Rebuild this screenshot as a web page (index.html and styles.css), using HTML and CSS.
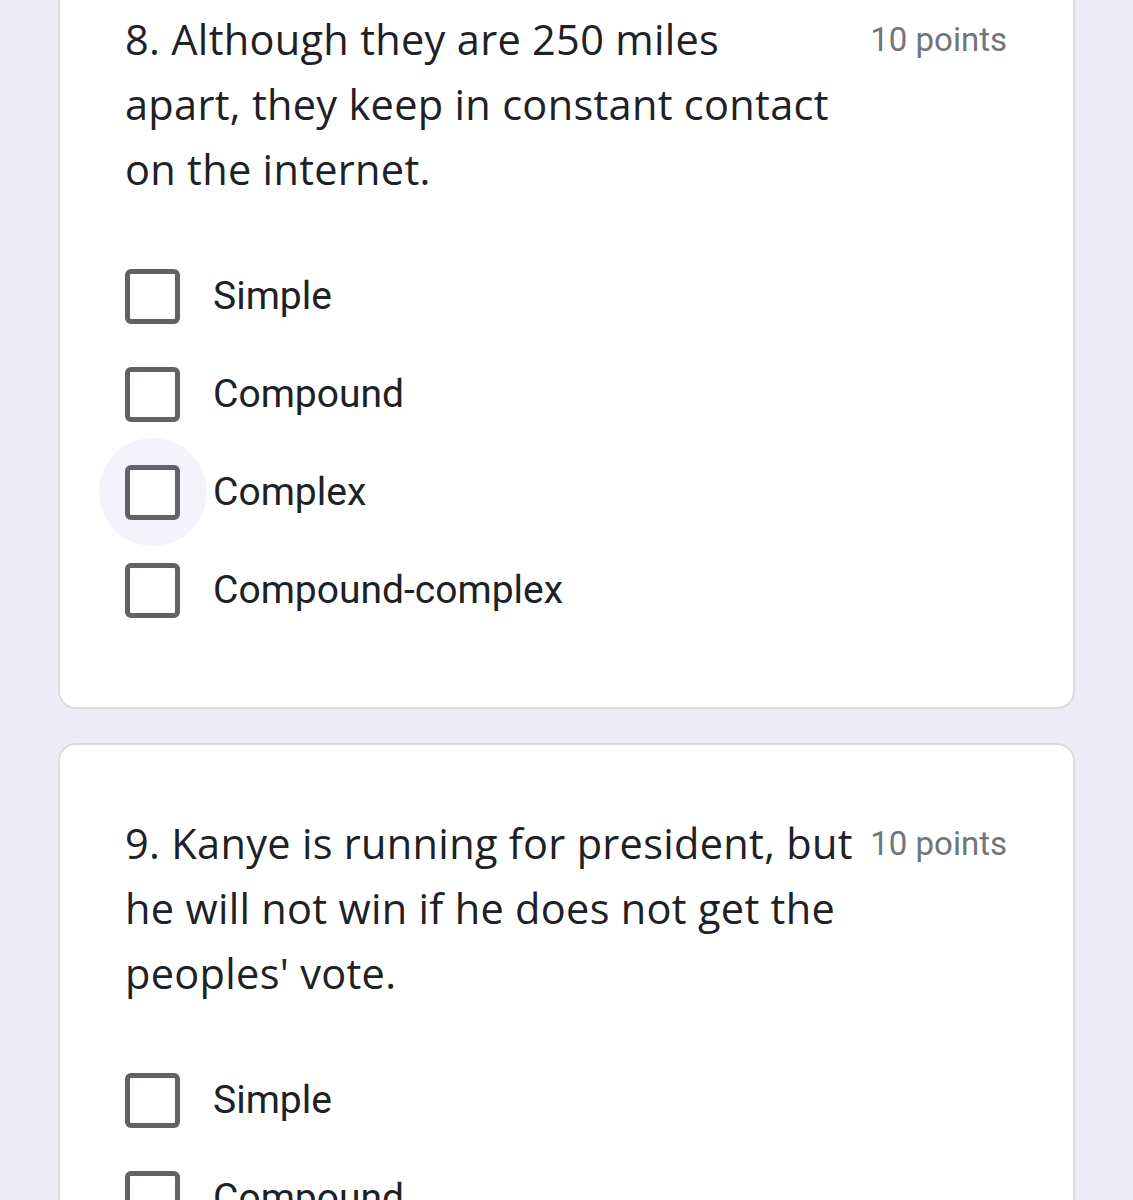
FILE: index.html
```html
<!DOCTYPE html>
<html>
<head>
<meta charset="utf-8">
<link rel="stylesheet" href="styles.css">
</head>
<body>
<main class="page">
  <section class="card card-first">
    <div class="q-head">
      <div class="q-text">8. Although they are 250 miles<br>apart, they keep in constant contact<br>on the internet.</div>
      <div class="q-points">10 points</div>
    </div>
    <ul class="options">
      <li class="option"><span class="ctrl"><span class="box"></span></span><span class="label">Simple</span></li>
      <li class="option"><span class="ctrl"><span class="box"></span></span><span class="label">Compound</span></li>
      <li class="option hover"><span class="ctrl"><span class="box"></span></span><span class="label">Complex</span></li>
      <li class="option"><span class="ctrl"><span class="box"></span></span><span class="label">Compound-complex</span></li>
    </ul>
  </section>
  <section class="card card-second">
    <div class="q-head">
      <div class="q-text">9. Kanye is running for president, but<br>he will not win if he does not get the<br>peoples' vote.</div>
      <div class="q-points">10 points</div>
    </div>
    <ul class="options">
      <li class="option"><span class="ctrl"><span class="box"></span></span><span class="label">Simple</span></li>
      <li class="option"><span class="ctrl"><span class="box"></span></span><span class="label">Compound</span></li>
    </ul>
  </section>
</main>
</body>
</html>
```

FILE: styles.css
```css
html, body {
  margin: 0;
  padding: 0;
  background: #eeebf8;
  overflow: hidden;
  height: 1200px;
}
.page {
  display: flex;
  flex-direction: column;
  gap: 34px;
  padding-left: 58px;
  width: 1017px;
}
.card {
  background: #fff;
  border: 2px solid #dcdbe2;
  border-radius: 18px;
  padding: 0 66px 0 65px;
}
.card-first {
  margin-top: -40px;
  padding-top: 45px;
  padding-bottom: 68px;
}
.card-second {
  padding-top: 66px;
}
.q-head {
  display: flex;
  justify-content: space-between;
  align-items: flex-start;
  gap: 16px;
}
.q-text {
  flex: 1;
  font-family: "Open Sans", sans-serif;
  font-size: 41.5px;
  line-height: 65px;
  letter-spacing: 0.3px;
  white-space: nowrap;
  color: #202124;
}
.q-points {
  font-family: Roboto, sans-serif;
  font-size: 33px;
  line-height: 65px;
  color: #70757a;
  white-space: nowrap;
}
.options {
  list-style: none;
  margin: 45px 0 0 0;
  padding: 0;
}
.option {
  display: flex;
  align-items: center;
  height: 98px;
  gap: 33px;
}
.ctrl {
  position: relative;
  width: 55px;
  height: 55px;
  flex: none;
}
.option.hover .ctrl::before {
  content: "";
  position: absolute;
  left: 50%;
  top: 50%;
  width: 108px;
  height: 108px;
  margin: -54px 0 0 -54px;
  border-radius: 50%;
  background: #f4f2fa;
}
.box {
  position: relative;
  display: block;
  width: 45px;
  height: 45px;
  border: 5px solid #5f6368;
  border-radius: 6px;
  background: #fff;
}
.label {
  font-family: Roboto, sans-serif;
  font-size: 39px;
  color: #202124;
}
```
